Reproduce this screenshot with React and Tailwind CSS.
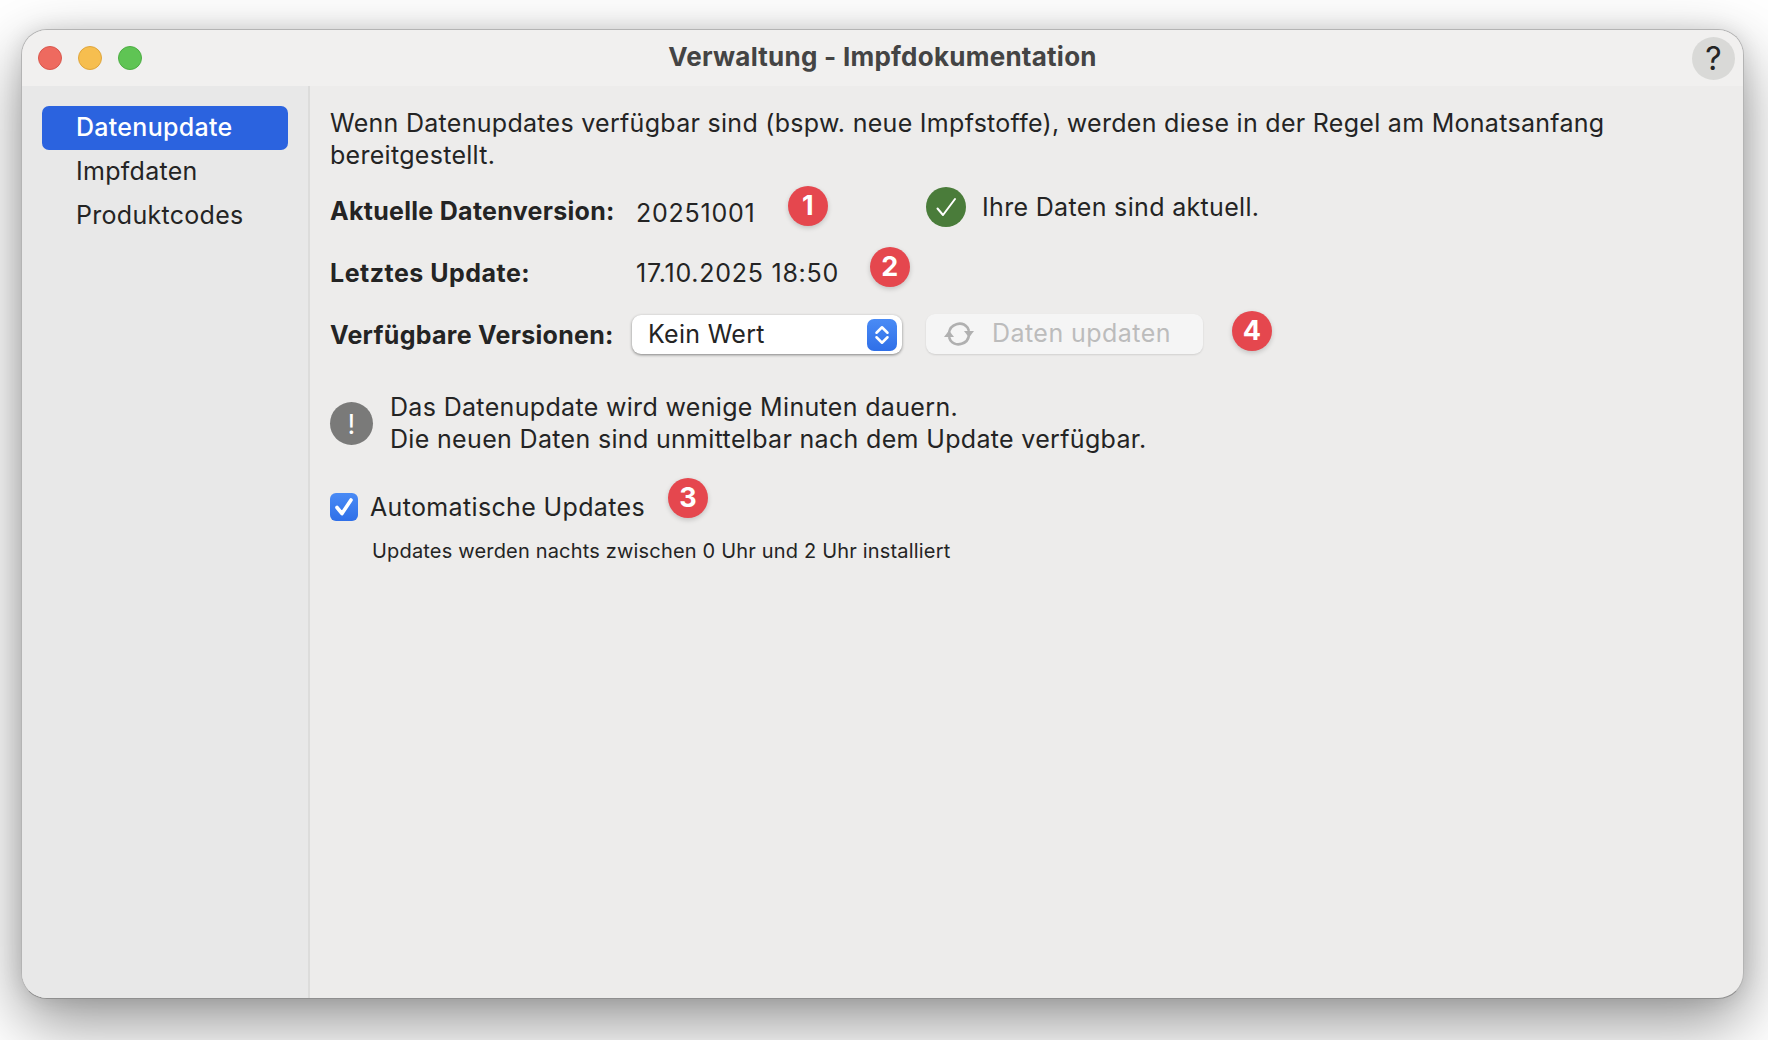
import { ChevronUp, ChevronDown } from 'lucide-react';

const menuItems = ['Datenupdate', 'Impfdaten', 'Produktcodes'];

// red annotation marker lying over the form
function Badge({ n, className }) {
  return (
    <div className={`absolute w-[40px] h-[40px] rounded-full bg-[#e5474e] text-white flex items-center justify-center text-[27px] font-bold shadow-[0_2px_5px_rgba(0,0,0,0.18)] ${className}`}>
      {n}
    </div>
  );
}

export default function App() {
  return (
    <div className="w-[1768px] h-[1040px] bg-white pt-[29px] pl-[21px] font-['Inter',sans-serif] text-[#242424] text-[25px] tracking-[0.29px] overflow-hidden">
      <div className="w-[1723px] h-[970px] flex flex-col rounded-[26px] overflow-hidden border border-[#b4b4b4] border-b-[#8f8f8f] bg-[#edeceb] shadow-[0_24px_64px_rgba(0,0,0,0.42),0_0_20px_rgba(0,0,0,0.1)]">
        {/* TITLE BAR */}
        <div className="h-[56px] shrink-0 bg-[#f1f0ef] relative flex items-center justify-center">
          <div className="absolute left-[16px] top-[16px] flex gap-[16px]">
            <div className="w-[24px] h-[24px] rounded-full bg-[#ee6a5f] border border-[#d9574d]" />
            <div className="w-[24px] h-[24px] rounded-full bg-[#f6be4f] border border-[#dfa53c]" />
            <div className="w-[24px] h-[24px] rounded-full bg-[#5fc454] border border-[#4dad43]" />
          </div>
          <span className="font-bold text-[26px] text-[#444444] tracking-[0.25px] mb-[3px]">Verwaltung - Impfdokumentation</span>
          <div className="absolute right-[8px] top-[7px] w-[43px] h-[43px] rounded-full bg-[#d9d9d7] flex items-center justify-center text-[32px]">?</div>
        </div>

        <div className="flex-1 flex min-h-0">
          {/* SIDEBAR */}
          <div className="w-[288px] shrink-0 bg-[#e8e8e8] border-r-2 border-[#dcdcdb] pl-[20px] pr-[20px] pt-[20px]">
            {menuItems.map((item, i) => (
              <div key={item} className={`h-[44px] pl-[34px] flex items-center rounded-[7px] ${i === 0 ? 'bg-[#2b63df] text-white font-medium' : ''}`}>
                {item}
              </div>
            ))}
          </div>

          {/* CONTENT */}
          <div className="flex-1 relative pl-[20px] pr-[100px] pt-[21px]">
            <p className="leading-[32px]">
              Wenn Datenupdates verfügbar sind (bspw. neue Impfstoffe), werden diese in der Regel am Monatsanfang bereitgestellt.
            </p>

            <div className="mt-[21px] h-[40px] flex items-center">
              <span className="w-[306px] font-bold">Aktuelle Datenversion:</span>
              <span className="tracking-[0.75px] mt-[3px]">20251001</span>
            </div>
            <div className="mt-[22px] h-[40px] flex items-center">
              <span className="w-[306px] font-bold tracking-[0.5px]">Letztes Update:</span>
              <span className="tracking-[0.75px]">17.10.2025 18:50</span>
            </div>
            <div className="mt-[21px] h-[42px] flex items-center">
              <span className="w-[302px] font-bold">Verfügbare Versionen:</span>
              <div className="mb-[3px] w-[270px] h-[39px] rounded-[9px] bg-white shadow-[0_1px_3px_rgba(0,0,0,0.45)] flex items-center justify-between pl-[16px] pr-[5px]">
                <span>Kein Wert</span>
                <div className="w-[30px] h-[32px] rounded-[7px] bg-gradient-to-b from-[#4a8bf5] to-[#2f6fe8] flex flex-col items-center justify-center text-white">
                  <ChevronUp size={24} strokeWidth={2.75} className="-mb-[6px]" />
                  <ChevronDown size={24} strokeWidth={2.75} className="-mt-[6px]" />
                </div>
              </div>
              <div className="mb-[4px] ml-[24px] w-[277px] h-[40px] rounded-[9px] bg-[#f5f5f5] shadow-[0_1px_2px_rgba(0,0,0,0.12)] flex items-center pl-[18px] text-[#bcbcbc]">
                <svg width="30" height="30" viewBox="0 0 30 30" fill="none" stroke="#b0b0b0" strokeWidth="2.6">
                  <path d="M5 14a10.5 10.5 0 0 1 18.5-5.5L25 12" />
                  <path d="M25 16a10.5 10.5 0 0 1-18.5 5.5L5 18" />
                  <path d="M30 12H20l5 6.5z" fill="#b0b0b0" stroke="none" />
                  <path d="M0 18h10L5 11.5z" fill="#b0b0b0" stroke="none" />
                </svg>
                <span className="ml-[18px] tracking-[0.45px]">Daten updaten</span>
              </div>
            </div>

            <div className="mt-[34px] flex items-center">
              <div className="w-[43px] h-[43px] rounded-full bg-[#7a7a79] text-white flex items-center justify-center text-[27px] pt-[5px]">!</div>
              <p className="ml-[17px] leading-[32px] tracking-[0.33px]">
                Das Datenupdate wird wenige Minuten dauern.<br />
                Die neuen Daten sind unmittelbar nach dem Update verfügbar.
              </p>
            </div>

            <div className="mt-[35px] h-[36px] flex items-center">
              <div className="w-[28px] h-[28px] mb-[2px] rounded-[6px] bg-gradient-to-b from-[#4a8bf5] to-[#2f6fe8] text-white flex items-center justify-center">
                <svg width="22" height="22" viewBox="0 0 22 22" fill="none" stroke="currentColor" strokeWidth="3.6" strokeLinecap="round" strokeLinejoin="round">
                  <path d="M4 11.5l5 6L18 4" />
                </svg>
              </div>
              <span className="ml-[12px] tracking-[0.35px]">Automatische Updates</span>
            </div>
            <p className="mt-[11px] ml-[42px] text-[20px] leading-[28px] tracking-[0.18px]">
              Updates werden nachts zwischen 0 Uhr und 2 Uhr installiert
            </p>

            {/* status next to the version */}
            <div className="absolute left-[616px] top-[101px] flex items-center">
              <div className="w-[40px] h-[40px] rounded-full bg-[#4a7c3a] text-white flex items-center justify-center">
                <svg width="24" height="26" viewBox="0 0 24 26" fill="none" stroke="currentColor" strokeWidth="2" strokeLinecap="round" strokeLinejoin="round">
                  <path d="M3.5 14.5l5.5 6.5L21 5" />
                </svg>
              </div>
              <span className="ml-[16px] mt-[2px] tracking-[0.33px]">Ihre Daten sind aktuell.</span>
            </div>

            <Badge n="1" className="left-[478px] top-[100px]" />
            <Badge n="2" className="left-[560px] top-[161px]" />
            <Badge n="4" className="left-[922px] top-[225px]" />
            <Badge n="3" className="left-[358px] top-[392px]" />
          </div>
        </div>
      </div>
    </div>
  );
}
